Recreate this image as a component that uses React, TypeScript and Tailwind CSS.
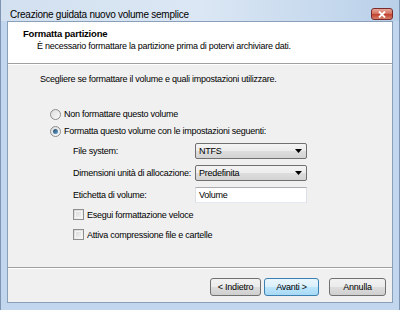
import React from "react";

function Radio({ checked, label }: { checked?: boolean; label: string }) {
  return (
    <div className="flex items-center h-[12px] pl-[42px]">
      <span className="relative w-[11px] h-[11px] rounded-full border border-[#8a8c8e] bg-linear-to-br from-[#dcdcdc] to-[#fbfbfb] flex items-center justify-center">
        {checked && (
          <span className="w-[5px] h-[5px] rounded-full bg-linear-to-br from-[#1f4a6e] to-[#6aa3cb]" />
        )}
      </span>
      <span className="ml-[3px]">{label}</span>
    </div>
  );
}

function Check({ label }: { label: string }) {
  return (
    <div className="flex items-center h-[11px] pl-[65px]">
      <span className="w-[11px] h-[11px] border border-[#8e8f8f] bg-linear-to-br from-[#d4d4d4] to-[#f7f7f7] p-px">
        <span className="block w-full h-full border border-[#f4f4f4]" />
      </span>
      <span className="ml-[3px]">{label}</span>
    </div>
  );
}

function Combo({ value }: { value: string }) {
  return (
    <div className="w-[112px] h-[16px] flex items-center justify-between border border-[#707070] rounded-[2px] bg-[linear-gradient(#f4f4f4,#ececec_50%,#dedede_50%,#d3d3d3)] pl-[3px] pr-[4px]">
      <span>{value}</span>
      <svg width="7" height="4" viewBox="0 0 7 4">
        <path d="M0 0h7L3.5 4z" fill="#000" />
      </svg>
    </div>
  );
}

function Field({ label, children }: { label: string; children: React.ReactNode }) {
  return (
    <div className="flex items-center h-[16px] pl-[65px]">
      <span className="w-[122px]">{label}</span>
      {children}
    </div>
  );
}

function Btn({ label, w, primary }: { label: string; w: string; primary?: boolean }) {
  return (
    <div
      className={
        primary
          ? `${w} h-[18px] flex items-center justify-center rounded-[3px] border border-[#3c7fb1] bg-[linear-gradient(#eaf6fd,#d9f0fc_50%,#bee6fd_50%,#a7d9f5)]`
          : `${w} h-[18px] flex items-center justify-center rounded-[3px] border border-[#707070] bg-[linear-gradient(#f2f2f2,#ebebeb_50%,#dddddd_50%,#cfcfcf)]`
      }
    >
      {label}
    </div>
  );
}

export default function App() {
  return (
    <div className="w-[400px] h-[310px] flex flex-col overflow-hidden border-x border-[#7d95b2] bg-[#c2d7ed] text-[9px] tracking-[-0.25px] leading-[12px] text-black font-['Liberation_Sans',Arial,sans-serif]">
      <div className="h-[21px] flex items-start pt-[8px] pl-[9px] pr-[6px] bg-linear-to-r from-[#d2e0ef] via-[#dbe7f4] to-[#b9d0e9]">
        <span className="text-[10px] tracking-[-0.25px] leading-[13px]">Creazione guidata nuovo volume semplice</span>
        <span className="ml-auto w-[22px] h-[12px] rounded-[3px] border border-[#7a2a2a] bg-[linear-gradient(#e9a99c,#d3735f_45%,#c2432f_55%,#d5806a)] flex items-center justify-center">
          <svg width="8" height="7" viewBox="0 0 8 7">
            <path d="M1 0.5l6 6M7 0.5l-6 6" stroke="#fff" strokeWidth="1.8" />
          </svg>
        </span>
      </div>
      <div className="flex-1 flex px-[6px] pb-[7px]">
        <div className="flex-1 flex flex-col border border-[#8a9fba] bg-[#f0f0f0]">
          <div className="h-[41px] bg-white pt-[6px]">
            <div className="pl-[15px] font-bold text-[9.5px] tracking-[-0.2px]">Formatta partizione</div>
            <div className="pl-[29px]">È necessario formattare la partizione prima di potervi archiviare dati.</div>
          </div>
          <div className="h-px bg-[#a0a0a0]" />
          <div className="h-px bg-white" />
          <div className="flex-1 flex flex-col pt-[8px]">
            <div className="pl-[32px]">Scegliere se formattare il volume e quali impostazioni utilizzare.</div>
            <div className="mt-[23px] flex flex-col gap-[5px]">
              <Radio label="Non formattare questo volume" />
              <Radio checked label="Formatta questo volume con le impostazioni seguenti:" />
            </div>
            <div className="mt-[6px] flex flex-col gap-[6px]">
              <Field label="File system:">
                <Combo value="NTFS" />
              </Field>
              <Field label="Dimensioni unità di allocazione:">
                <Combo value="Predefinita" />
              </Field>
              <Field label="Etichetta di volume:">
                <div className="w-[112px] h-[16px] flex items-center bg-white border border-[#abadb3] border-x-[#dbdfe6] border-b-[#e3e9ef] pl-[3px]">
                  Volume
                </div>
              </Field>
            </div>
            <div className="mt-[6px] flex flex-col gap-[9px]">
              <Check label="Esegui formattazione veloce" />
              <Check label="Attiva compressione file e cartelle" />
            </div>
          </div>
          <div className="h-px bg-[#a0a0a0]" />
          <div className="h-px bg-white" />
          <div className="h-[33px] flex items-start justify-end pt-[9px] pr-[6px]">
            <Btn label="< Indietro" w="w-[51px]" />
            <div className="w-[3px]" />
            <Btn label="Avanti >" w="w-[55px]" primary />
            <div className="w-[10px]" />
            <Btn label="Annulla" w="w-[57px]" />
          </div>
        </div>
      </div>
    </div>
  );
}
